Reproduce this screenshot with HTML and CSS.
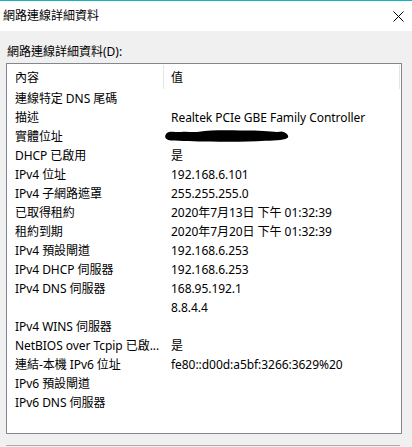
FILE: index.html
```html
<!DOCTYPE html>
<html lang="zh-Hant">
<head>
<meta charset="utf-8">
<title>網路連線詳細資料</title>
<link rel="stylesheet" href="styles.css">
</head>
<body>
<div class="window">
  <div class="accent"></div>
  <div class="titlebar">
    <span class="title">網路連線詳細資料</span>
    <span class="close">
      <svg width="11" height="11" viewBox="0 0 11 11"><path d="M0.5 0.5 L10.5 10.5 M10.5 0.5 L0.5 10.5" stroke="#000" stroke-width="1" fill="none"/></svg>
    </span>
  </div>
  <div class="content">
    <div class="label">網路連線詳細資料(D):</div>
    <div class="listbox">
      <div class="header">
        <div class="hcell">內容</div>
        <div class="hcell">值</div>
      </div>
      <div class="rows">
        <div class="cell">連線特定 DNS 尾碼</div><div class="cell"></div>
        <div class="cell">描述</div><div class="cell">Realtek PCIe GBE Family Controller</div>
        <div class="cell">實體位址</div><div class="cell"><svg class="redact" width="124" height="12" viewBox="0 0 124 12"><path d="M4 2 C8 1 12 2.5 16 2 C22 1.2 28 2.6 34 1.8 C45 0.2 60 0 75 0.6 C90 0.4 104 1.2 112 2 L117 1.5 C121 2.5 124 5 123 7.5 C121 10 112 10.5 100 10.8 C85 11.8 65 12 45 11.6 C30 11.4 15 11 6 10.5 C1 10 -0.5 7.5 0.5 5 C1 3.5 2.5 2.3 4 2 Z" fill="#000"/></svg></div>
        <div class="cell">DHCP 已啟用</div><div class="cell">是</div>
        <div class="cell">IPv4 位址</div><div class="cell">192.168.6.101</div>
        <div class="cell">IPv4 子網路遮罩</div><div class="cell">255.255.255.0</div>
        <div class="cell">已取得租約</div><div class="cell">2020年7月13日 下午 01:32:39</div>
        <div class="cell">租約到期</div><div class="cell">2020年7月20日 下午 01:32:39</div>
        <div class="cell">IPv4 預設閘道</div><div class="cell">192.168.6.253</div>
        <div class="cell">IPv4 DHCP 伺服器</div><div class="cell">192.168.6.253</div>
        <div class="cell">IPv4 DNS 伺服器</div><div class="cell">168.95.192.1</div>
        <div class="cell"></div><div class="cell">8.8.4.4</div>
        <div class="cell">IPv4 WINS 伺服器</div><div class="cell"></div>
        <div class="cell">NetBIOS over Tcpip 已啟...</div><div class="cell">是</div>
        <div class="cell">連結-本機 IPv6 位址</div><div class="cell">fe80::d00d:a5bf:3266:3629%20</div>
        <div class="cell">IPv6 預設閘道</div><div class="cell"></div>
        <div class="cell">IPv6 DNS 伺服器</div><div class="cell"></div>
      </div>
    </div>
    <div class="button-edge"></div>
  </div>
</div>
</body>
</html>
```
FILE: styles.css
```css
* { box-sizing: border-box; }
html, body { margin: 0; padding: 0; }
body {
  width: 412px;
  height: 447px;
  overflow: hidden;
  background: #f0f0f0;
  font-family: "Noto Sans", "Noto Sans CJK TC", sans-serif;
  font-size: 12px;
  color: #000;
}
.accent { height: 1px; background: #17b2c2; }
.titlebar {
  height: 30px;
  background: #fff;
  display: flex;
  align-items: center;
  justify-content: space-between;
  padding: 0 8px 0 3px;
}
.title { line-height: 16px; }
.close { display: flex; width: 11px; height: 11px; }
.content { padding: 0 10px 0 6px; }
.label {
  height: 32px;
  padding: 13px 0 0 1px;
  line-height: 16px;
}
.listbox {
  width: 396px;
  height: 371px;
  border: 1px solid #828790;
  background: #fff;
  padding-right: 1px;
}
.header {
  display: grid;
  grid-template-columns: 157px 236px;
  height: 25px;
}
.hcell {
  border-right: 1px solid #e5e5e5;
  padding-left: 8px;
  display: flex;
  align-items: center;
  margin: 1px 0 0;
}
.hcell + .hcell { padding-left: 7px; }
.rows {
  display: grid;
  grid-template-columns: 157px 1fr;
  grid-auto-rows: 19px;
}
.cell {
  padding-left: 8px;
  padding-right: 2px;
  line-height: 19px;
  white-space: nowrap;
  overflow: hidden;
  text-overflow: ellipsis;
  display: block;
  letter-spacing: -0.05px;
}
.rows .cell:nth-child(2n) { padding-left: 7px; }
.redact { display: block; margin: 3px 0 0 -6px; }
.button-edge {
  margin-top: 11px;
  height: 2px;
  width: 394px;
  border-top: 1px solid #adadad;
}
```
